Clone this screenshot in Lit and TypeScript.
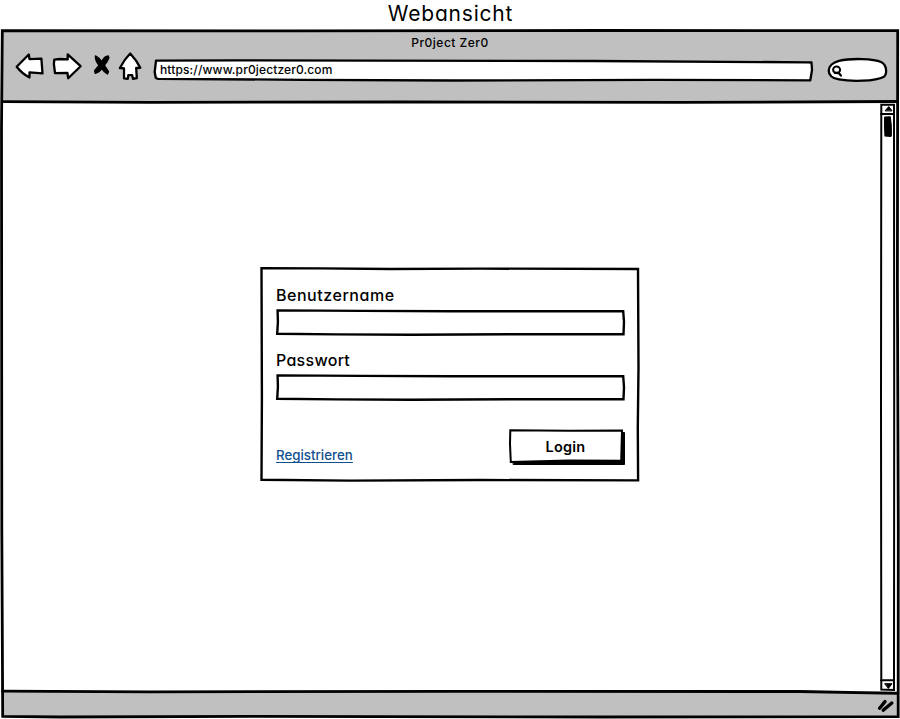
import { LitElement, html, svg, css } from "lit";
import { customElement, property } from "lit/decorators.js";

const ink = css`
  * { box-sizing: border-box; }
  svg { display: block; overflow: visible; fill: none; stroke: #000; stroke-width: 2.4; stroke-linejoin: round; stroke-linecap: round; }
  .paper { fill: #fff; }
  .solid { fill: #000; }
  .square { stroke-linejoin: miter; }
  .frame { position: absolute; inset: 0; z-index: 0; }
`;

@customElement("sketch-field")
class SketchField extends LitElement {
  @property() label = "";
  static styles = [ink, css`
    :host { display: block; }
    .label { height: 24px; line-height: 24px; font-size: 16px; white-space: nowrap; letter-spacing: var(--spacing, 0); }
    .input { margin-top: 2px; }
  `];
  render() {
    return html`
      <div class="label">${this.label}</div>
      <svg class="input" width="349" height="27" viewBox="0 0 349 27">
        <path class="paper square" d="M1.6 1.4L85 1.9L175 2.3L260 2.3L347.2 2.1L348 13L347.5 25.3L240 25.2L135 25.8L60 25.4L1.2 24.7L1.9 13Z" />
      </svg>`;
  }
}

@customElement("sketch-scrollbar")
class SketchScrollbar extends LitElement {
  static styles = [ink, css`:host { display: block; } svg { stroke-width: 2; }`];
  render() {
    return html`<svg width="15" height="588" viewBox="0 0 15 588">
      <path class="paper square" d="M1.3 1.7L14 1.7L14.2 300L14 587L1.3 586.5L1 300Z" />
      <path d="M1 11L14 11M1 577.2L14 577.2" />
      <path class="solid" stroke-width="1" d="M5.3 7.6L8.8 3.5L11.8 7.6ZM5 580.7L12 580.7L8.6 585.2Z" />
      <path class="solid" stroke-width="1.2" d="M4.7 14.2L10.2 13.8L11.2 22L11.4 32L10.8 33.4L5 33L4.6 24Z" />
    </svg>`;
  }
}

@customElement("login-card")
class LoginCard extends LitElement {
  static styles = [ink, css`
    :host { display: block; position: relative; width: 379px; height: 215px; padding: 16px 13px 0 16px; }
    .content { position: relative; display: flex; flex-direction: column; }
    .first { --spacing: 0.53px; }
    .second { margin-top: 12px; --spacing: 0.28px; }
    .actions { display: flex; justify-content: space-between; align-items: flex-start; margin-top: 28px; }
    .link { margin-top: 19px; height: 15px; line-height: 14px; font-size: 13.3px; letter-spacing: 0; color: #10508f; text-decoration: none; border-bottom: 1px solid #10508f; }
    .button { position: relative; width: 117px; height: 38px; padding: 0; border: 0; background: none; font: inherit; font-feature-settings: inherit; color: #000; }
    .caption { position: absolute; left: 0; top: 0; width: 113px; line-height: 35px; text-align: center; font-size: 14.5px; font-weight: 600; letter-spacing: 0.2px; }
  `];
  render() {
    return html`
      <svg class="frame" width="379" height="215" viewBox="0 0 379 215">
        <path class="paper square" d="M1.5 1.2L60 1.4L130 2L220 1.6L378 2L378.5 100L377.8 160L378.1 213.4L220 213L90 213.6L1.5 212.7L1.9 130Z" />
      </svg>
      <div class="content">
        <sketch-field class="first" label="Benutzername"></sketch-field>
        <sketch-field class="second" label="Passwort"></sketch-field>
        <div class="actions">
          <a class="link">Registrieren</a>
          <button class="button">
            <svg class="frame" width="117" height="38" viewBox="0 0 117 38">
              <path class="solid square" stroke-width="1" d="M4.5 4L115.5 3.5L115.5 35.5L4.5 35.5Z" />
              <path class="paper square" stroke-width="2" d="M1.3 1.2L60 1.8L113 1.5L112.2 31.8L60 31.6L1.8 33L1 15Z" />
            </svg>
            <span class="caption">Login</span>
          </button>
        </div>
      </div>`;
  }
}

@customElement("browser-toolbar")
class BrowserToolbar extends LitElement {
  static styles = [ink, css`
    :host { display: block; background: #c0c0c0; }
    .name { height: 25px; line-height: 25px; text-align: center; font-size: 12px; letter-spacing: 0.5px; }
    .row { display: flex; align-items: flex-start; padding-left: 13px; height: 32px; }
    .row path { stroke-width: 2.3; }
    .row .stop path { stroke-width: 1.5; }
    .back { width: 37px; } .forward { width: 40px; } .stop { width: 26px; } .home { width: 35px; }
    .address { position: relative; width: 660px; height: 24px; margin-top: 3px; }
    .url { position: relative; display: block; padding-left: 7px; line-height: 23px; font-size: 12px; white-space: nowrap; letter-spacing: 0.13px; }
    .search { margin-left: 14px; margin-top: 1px; }
  `];
  private icon(name: string, width: number, shape: unknown) {
    return html`<div class=${name}><svg width=${width} height="30" viewBox="0 0 ${width} 30">${shape}</svg></div>`;
  }
  render() {
    return html`
      <div class="name">Pr0ject Zer0</div>
      <div class="row">
        ${this.icon("back", 30, svg`<path class="paper" d="M1.7 11.7L13.8 -.5L14.5 4.1L26.4 3.6L27.5 18.3L14.5 17.3L14.5 22.5Q7 18.5 1.7 11.7Z" />`)}
        ${this.icon("forward", 30, svg`<path class="paper" d="M2.3 4.7L8 4L15.7 4.4L15.7 -.6L28.6 11.2L16.2 23.3L15.4 18L3 18.1L1.9 9Z" />`)}
        ${this.icon("stop", 20, svg`<path class="solid" d="M3.5 1Q6.8 2.5 9.6 7Q12.6 1 16.2 1L16.8 3Q15.2 7 12.3 10.3L16.4 16.6L15.4 18.9Q12 17 9.8 13.4Q7 17.6 3.3 18.2L2.7 15.7L7.1 10.3Q3.1 5.6 3.5 1Z" />`)}
        ${this.icon("home", 26, svg`<path class="paper" d="M12.2 -1.5Q19 5.8 22.3 12.8L18.2 13L18.8 23L15 23.8L14.2 20.2L10.3 20.2L9.8 23.8L6 23.3L6 13.4L1.9 13Q6.5 4.2 12.2 -1.5Z" />`)}
        <div class="address">
          <svg class="frame" width="660" height="24" viewBox="0 0 660 24">
            <path class="paper" d="M3 2.6L80 2.3L220 2.6L440 3L655 4.3L658.5 4.5L659 12L657.3 22.3L500 21.8L300 22.5L150 21.8L5 20.8L2.8 20L1.7 14Z" />
          </svg>
          <span class="url">https://www.pr0jectzer0.com</span>
        </div>
        <svg class="search" width="61" height="26" viewBox="0 0 61 26">
          <path class="paper" d="M12 4.8C24 2 47 2.5 54 6C60.2 9 60.2 18 57 20.7C48 25.5 24 25.7 12 23.4C-2.2 21.5-1.2 8 12 4.8Z" />
          <ellipse cx="9.6" cy="13.8" rx="3.5" ry="3.3" stroke-width="2" /><path d="M8 16.8L11.8 17L13.9 19.5" />
        </svg>
      </div>`;
  }
}

@customElement("app-root")
class AppRoot extends LitElement {
  static styles = [ink, css`
    :host { display: grid; grid-template-rows: 29px 690px; width: 900px; height: 719px; overflow: hidden; background: #fff; color: #000; font-family: Inter, "Noto Sans", sans-serif; font-weight: 500; font-feature-settings: "cv11" 1, "ss03" 1; }
    .title { margin: 0; padding-left: 1px; text-align: center; font-size: 21px; font-weight: 400; line-height: 27px; letter-spacing: 0.8px; }
    .window { position: relative; display: grid; grid-template-rows: 74px 588px 26px; padding: 0 2px 2px; }
    browser-toolbar { margin-top: 1px; height: 73px; }
    .viewport { display: flex; justify-content: flex-end; position: relative; padding-right: 3px; }
    .card { flex: 1; display: flex; padding: 164px 0 0 258px; }
    .status { display: flex; justify-content: flex-end; padding: 7px 4px 0 0; background: #c0c0c0; }
    .outline { position: absolute; inset: 0; pointer-events: none; stroke-width: 2.8; }
  `];
  render() {
    return html`
      <h1 class="title">Webansicht</h1>
      <main class="window">
        <browser-toolbar></browser-toolbar>
        <section class="viewport">
          <div class="card"><login-card></login-card></div>
          <sketch-scrollbar></sketch-scrollbar>
        </section>
        <footer class="status">
          <svg width="17" height="14" viewBox="0 0 17 14"><path stroke-width="3.4" d="M2.6 10.3L8 3.6M6.2 12.2L14.8 5" /></svg>
        </footer>
        <svg class="outline" width="900" height="690" viewBox="0 0 900 690">
          <path class="square" d="M2.3 1.7L300 1.9L600 1.5L897.7 1.7L897.4 250L898.3 500L898.2 687.7L600 688L250 687.3L60 688L2.7 687.3L1.8 500L1.5 100Z" />
          <path d="M2.5 72.6L150 73.3L400 73L680 73.4L897 72.5M2.5 662.2L150 662.8L450 662.3L800 662.5L897 664.4" />
        </svg>
      </main>`;
  }
}
